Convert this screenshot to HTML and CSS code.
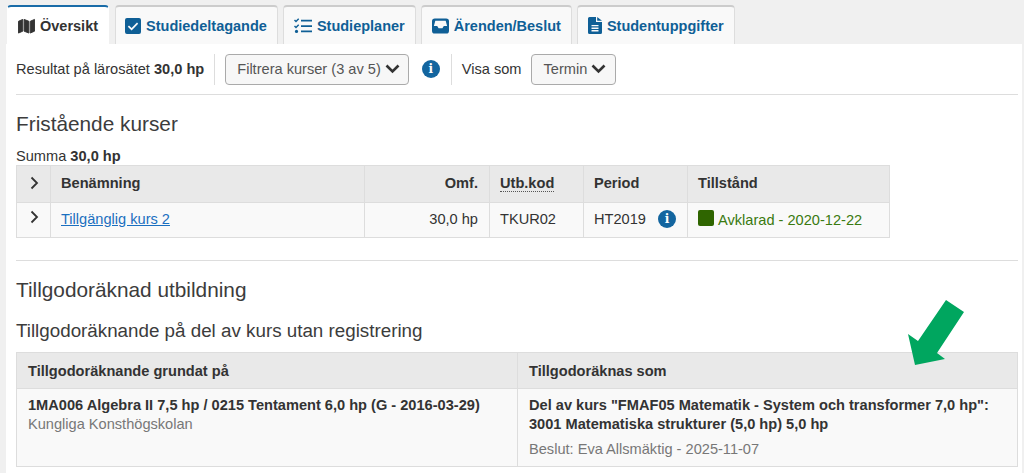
FILE: index.html
```html
<!DOCTYPE html>
<html lang="en">
<head>
  <meta charset="UTF-8" />
  <title>Översikt</title>
  <link rel="stylesheet" href="styles.css">
</head>
<body>
  <ul class="tabs">
    <li class="tab active">
      <svg class="tab-icon" viewBox="0 0 18 17"><path d="M.5 3.500 5 1.500v12.500L.5 16zM6.500 1.500l5 2v12.500l-5-2zM13 3.500l4.500-2V14L13 16z"/></svg>
      Översikt
    </li>
    <li class="tab">
      <svg class="tab-icon check" viewBox="0 0 16 16"><path fill-rule="evenodd" d="M2 0h12a2 2 0 0 1 2 2v12a2 2 0 0 1-2 2H2a2 2 0 0 1-2-2V2a2 2 0 0 1 2-2zm4.600 12.400 6.600-6.600L12 4.600l-5.400 5.400L4 7.500 2.800 8.700z"/></svg>
      Studiedeltagande
    </li>
    <li class="tab">
      <svg class="tab-icon list" viewBox="0 0 18 16"><path d="M0 2.500 1 1.500l1 1L4.200.3l1 1L2 4.500zM0 8.500l1-1 1 1 2.200-2.200 1 1L2 10.500zM7 1.800h11v1.800H7zM7 7.200h11V9H7zM7 12.500h11v1.800H7z"/><circle cx="2.500" cy="13.400" r="1.600"/></svg>
      Studieplaner
    </li>
    <li class="tab">
      <svg class="tab-icon" viewBox="0 0 18 16"><path fill-rule="evenodd" d="M3 0h12a3 3 0 0 1 3 3v10a3 3 0 0 1-3 3H3a3 3 0 0 1-3-3V3a3 3 0 0 1 3-3zm.500 2.500h11L16 8h-3.500L11 10.500H7L5.500 8H2z"/></svg>
      Ärenden/Beslut
    </li>
    <li class="tab">
      <svg class="tab-icon doc" viewBox="0 0 14 17"><path fill-rule="evenodd" d="M1.500 0H8v5h6v10.500a1.500 1.500 0 0 1-1.500 1.500h-11A1.500 1.500 0 0 1 0 15.500v-14A1.500 1.500 0 0 1 1.500 0zM3.500 8v1.300h7V8zm0 2.600v1.300h7v-1.300zm0 2.500v1.300h7v-1.300zM9.200 0 14 3.800H9.200z"/></svg>
      Studentuppgifter
    </li>
  </ul>

  <div class="content">
    <div class="toolbar">
      <span>Resultat på lärosätet <b>30,0 hp</b></span>
      <span class="sep"></span>
      <button class="btn filter-btn">Filtrera kurser (3 av 5)
        <svg class="chevron" viewBox="0 0 15 10"><path d="M1.500 1.500 7.500 7.500l6-6"/></svg>
      </button>
      <span class="info toolbar-info">i</span>
      <span class="sep"></span>
      <span>Visa som</span>
      <button class="btn term-btn">Termin
        <svg class="chevron" viewBox="0 0 15 10"><path d="M1.500 1.500 7.500 7.500l6-6"/></svg>
      </button>
    </div>

    <h2 class="first">Fristående kurser</h2>
    <div class="summa">Summa <b>30,0 hp</b></div>
    <table class="courses">
      <tr>
        <th class="c-toggle"><svg class="caret" viewBox="0 0 9 14"><path d="M1.500 1.500 7 7l-5.500 5.500"/></svg></th>
        <th class="c-name">Benämning</th>
        <th class="c-omf num">Omf.</th>
        <th class="c-kod"><span class="abbr">Utb.kod</span></th>
        <th class="c-period">Period</th>
        <th>Tillstånd</th>
      </tr>
      <tr>
        <td class="row-toggle"><svg class="caret" viewBox="0 0 9 14"><path d="M1.500 1.500 7 7l-5.500 5.500"/></svg></td>
        <td><a href="#">Tillgänglig kurs 2</a></td>
        <td class="num">30,0 hp</td>
        <td>TKUR02</td>
        <td><div class="period-cell">HT2019 <span class="info period-info">i</span></div></td>
        <td class="status"><span class="status-box"></span>Avklarad - 2020-12-22</td>
      </tr>
    </table>

    <hr>

    <h2>Tillgodoräknad utbildning</h2>
    <h3>Tillgodoräknande på del av kurs utan registrering</h3>
    <table class="credits">
      <tr>
        <th class="c-left">Tillgodoräknande grundat på</th>
        <th>Tillgodoräknas som</th>
      </tr>
      <tr>
        <td>
          <b>1MA006 Algebra II 7,5 hp / 0215 Tentament 6,0 hp (G - 2016-03-29)</b>
          <div class="muted">Kungliga Konsthögskolan</div>
        </td>
        <td>
          <b>Del av kurs "FMAF05 Matematik - System och transformer 7,0 hp": 3001 Matematiska strukturer (5,0 hp) 5,0 hp</b>
          <div class="muted decision">Beslut: Eva Allsmäktig - 2025-11-07</div>
        </td>
      </tr>
    </table>

    <svg class="arrow" viewBox="0 0 56 66"><path d="M38 0 56 12 29 53 37 59 7 65 0 34 10 41z"/></svg>
  </div>
</body>
</html>
```

FILE: styles.css
```css
* {
  box-sizing: border-box;
}
html, body {
  height: 100%;
}
body {
  margin: 0;
  background: #f0f0f0;
  font-family: "Liberation Sans", Arial, sans-serif;
  font-size: 14.6px;
  color: #333;
  overflow: hidden;
}
.tabs {
  display: flex;
  gap: 5px;
  list-style: none;
  margin: 0;
  padding: 5px 0 0 7px;
  height: 44px;
}
.tab {
  display: flex;
  align-items: center;
  gap: 5px;
  padding: 0 10px;
  background: #f9f9f9;
  border: 1px solid #ddd;
  border-top: 2px solid #ccc;
  border-bottom: none;
  border-radius: 4px 4px 0 0;
  font-size: 14.5px;
  font-weight: bold;
  color: #0f5f96;
}
.tab.active {
  background: #fff;
  border-color: #fff;
  border-top-color: #1a6ca8;
  color: #333;
  margin-right: 1px;
}
.tab-icon {
  width: 17px;
  height: 16px;
  fill: #0f5f96;
}
.tab-icon.check {
  width: 16px;
  height: 16px;
  margin-left: -1px;
}
.tab-icon.list {
  width: 18px;
}
.tab-icon.doc {
  width: 14px;
  height: 17px;
}
.active .tab-icon {
  fill: #333;
  stroke: #333;
  stroke-width: 1;
  stroke-linejoin: round;
}
.content {
  position: relative;
  margin: 0 2px 0 6px;
  background: #fff;
  padding: 10px 4px 0 10px;
  height: 429px;
}
.toolbar {
  display: flex;
  align-items: center;
  height: 41px;
  padding-bottom: 10px;
  border-bottom: 1px solid #ddd;
}
.sep {
  width: 1px;
  height: 31px;
  background: #ddd;
  margin: 0 10px;
}
.btn {
  display: flex;
  align-items: center;
  height: 31px;
  padding: 0 8px 0 11px;
  background: #f7f7f7;
  border: 1px solid #aaa;
  border-radius: 4px;
  font: inherit;
  color: #555;
}
.term-btn {
  margin-left: 9px;
  padding: 0 9px 0 12px;
}
.chevron {
  width: 15px;
  height: 10px;
  margin-left: 4px;
  fill: none;
  stroke: #333;
  stroke-width: 2.6;
}
.info {
  display: inline-flex;
  align-items: center;
  justify-content: center;
  width: 18px;
  height: 18px;
  border-radius: 50%;
  background: #13659f;
  color: #fff;
  font-family: "DejaVu Serif", serif;
  font-size: 12px;
  font-weight: bold;
}
.toolbar-info {
  margin-left: 13px;
  margin-right: 1px;
}
.period-cell {
  display: flex;
  align-items: center;
}
.period-info {
  margin-left: 12px;
}
h2 {
  margin: 0;
  font-size: 20.8px;
  font-weight: normal;
  line-height: 24px;
  color: #3c3c3c;
}
h2.first {
  margin-top: 17px;
}
h3 {
  margin: 17px 0 0;
  font-size: 18.8px;
  font-weight: normal;
  line-height: 24px;
  color: #3c3c3c;
}
.summa {
  margin-top: 12px;
  line-height: 16px;
  height: 17px;
}
table {
  border-collapse: collapse;
  table-layout: fixed;
}
th, td {
  border: 1px solid #ddd;
  text-align: left;
  padding: 0 10px;
}
th {
  background: #e9e9e9;
  font-weight: bold;
}
td {
  background: #f9f9f9;
}
.courses {
  width: 874px;
}
.courses th {
  height: 37px;
  padding-bottom: 3px;
}
.courses td {
  height: 35px;
  padding-bottom: 3px;
}
.c-toggle {
  width: 34px;
}
.c-name {
  width: 314px;
}
.c-omf {
  width: 125px;
}
.c-kod {
  width: 94px;
}
.c-period {
  width: 104px;
}
.courses .num {
  text-align: right;
  padding-right: 11px;
}
.abbr {
  border-bottom: 1px dotted #555;
}
.caret {
  display: block;
  width: 9px;
  height: 14px;
  margin-left: 3px;
  fill: none;
  stroke: #333;
  stroke-width: 1.8;
}
.row-toggle .caret {
  margin-top: -3px;
}
a {
  color: #1a6fc0;
}
.status {
  color: #3a7a10;
}
.status-box {
  display: inline-block;
  width: 16px;
  height: 16px;
  margin-right: 4px;
  border-radius: 2px;
  background: #2f6500;
  vertical-align: -1px;
}
hr {
  margin: 22px 0 17px;
  border: none;
  border-top: 1px solid #ddd;
}
.credits {
  width: 1002px;
  margin-top: 9px;
}
.c-left {
  width: 501px;
}
.credits th {
  height: 36px;
  padding: 0 10px 0 11px;
}
.credits td {
  height: 78px;
  padding: 7px 10px 0 11px;
  vertical-align: top;
  line-height: 19px;
}
.muted {
  color: #777;
}
.decision {
  margin-top: 6px;
}
.arrow {
  position: absolute;
  right: 58px;
  top: 256px;
  width: 56px;
  height: 66px;
  fill: #00a65f;
}
```
